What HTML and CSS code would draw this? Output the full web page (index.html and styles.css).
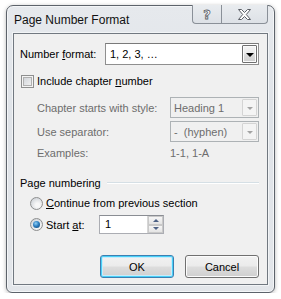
FILE: index.html
```html
<!DOCTYPE html>
<html lang="en">
<head>
    <meta charset="UTF-8">
    <title>Page Number Format</title>
    <link rel="stylesheet" href="styles.css">
</head>
<body>
    <div class="window">
        <div class="titlebar">
            <div class="title">Page Number Format</div>
            <div class="caption-buttons">
                <div class="cap-btn help">?</div>
                <div class="cap-btn close">
                    <svg width="13" height="11" viewBox="0 0 13 11">
                        <polygon points="0.5,0.5 3.5,0.5 6.5,3.5 9.5,0.5 12.5,0.5 8.3,5.5 12.5,10.5 9.5,10.5 6.5,7.5 3.5,10.5 0.5,10.5 4.7,5.5" fill="#fff" stroke="#5b5f66" stroke-width="1"/>
                    </svg>
                </div>
            </div>
        </div>

        <div class="client">
            <div class="row format-row">
                <span class="format-label">Number <u>f</u>ormat:</span>
                <div class="combo format-combo">
                    <span class="combo-text">1, 2, 3, …</span>
                    <span class="drop"><i class="tri"></i></span>
                </div>
            </div>

            <div class="row check-row">
                <span class="checkbox"></span>
                <span>Include chapter <u>n</u>umber</span>
            </div>

            <div class="row sub-row style-row">
                <span class="sub-label">Chapter starts with style:</span>
                <div class="combo small-combo disabled">
                    <span class="combo-text">Heading 1</span>
                    <span class="drop"><i class="tri"></i></span>
                </div>
            </div>

            <div class="row sub-row sep-row">
                <span class="sub-label">Use separator:</span>
                <div class="combo small-combo disabled">
                    <span class="combo-text pre">-  (hyphen)</span>
                    <span class="drop"><i class="tri"></i></span>
                </div>
            </div>

            <div class="row sub-row examples-row">
                <span class="sub-label">Examples:</span>
                <span class="example-value">1-1, 1-A</span>
            </div>

            <div class="row group-header">
                <span>Page numbering</span>
                <span class="group-line"></span>
            </div>

            <div class="row radio-row first-radio">
                <span class="radio"></span>
                <span><u>C</u>ontinue from previous section</span>
            </div>

            <div class="row radio-row start-row">
                <span class="radio checked"></span>
                <span class="start-label">Start <u>a</u>t:</span>
                <div class="spinner">
                    <span class="spin-text">1</span>
                    <span class="spin-btns">
                        <span class="spin-btn"><i class="tri-up"></i></span>
                        <span class="spin-btn"><i class="tri-down"></i></span>
                    </span>
                </div>
            </div>

            <div class="row button-row">
                <button class="btn default">OK</button>
                <button class="btn">Cancel</button>
            </div>
        </div>
    </div>
</body>
</html>
```

FILE: styles.css
```css
* {
    box-sizing: border-box;
}

body {
    margin: 0;
    background: #ffffff;
    font-family: "Liberation Sans", Arial, sans-serif;
    font-size: 11px;
    color: #000;
}

u {
    text-decoration: underline;
    text-underline-offset: 1px;
}

.window {
    margin: 5px 6px 0 6px;
    width: 269px;
    height: 288px;
    border: 1px solid #5d636b;
    border-radius: 7px 7px 6px 6px;
    background: linear-gradient(#e6e9ed, #dfe3e8 40%, #e3e6ea);
    box-shadow: 0 1px 4px rgba(0, 0, 0, 0.28), inset 0 0 0 1px #f4f6f8;
    padding: 0 6px 7px 6px;
}

.titlebar {
    height: 27px;
    display: flex;
    justify-content: space-between;
    align-items: flex-start;
}

.title {
    font-size: 12px;
    line-height: 14px;
    margin-top: 7px;
    padding-left: 1px;
    color: #111;
}

.caption-buttons {
    display: flex;
    margin-top: -1px;
    margin-right: 0;
}

.cap-btn {
    height: 19px;
    border: 1px solid #8a9098;
    border-top: none;
    background: linear-gradient(#e9ecef, #dde1e6);
    display: flex;
    align-items: center;
    justify-content: center;
}

.help {
    width: 29px;
    border-radius: 0 0 0 4px;
    border-right: none;
    font-family: "DejaVu Sans", sans-serif;
    font-weight: bold;
    font-size: 13px;
    color: #fff;
    -webkit-text-stroke: 0.8px #5b5f66;
}

.close {
    width: 47px;
    border-radius: 0 0 4px 0;
}

.client {
    height: 252px;
    border: 1px solid #717880;
    background: #f0f0f0;
    padding: 0 8px 0 6px;
    box-shadow: 0 0 0 1px #f2f4f6;
}

.row {
    display: flex;
    align-items: center;
}

.format-row {
    margin-top: 9px;
    height: 22px;
}

.format-label {
    width: 85px;
}

.combo {
    display: flex;
    align-items: center;
    justify-content: space-between;
    background: #fff;
    border: 1px solid #8f8f8f;
    border-top-color: #7a7a7a;
    padding: 1px 1px 1px 4px;
}

.format-combo {
    width: 154px;
    height: 22px;
}

.drop {
    width: 15px;
    height: 18px;
    border: 1px solid #707070;
    border-radius: 1px;
    background: linear-gradient(#f4f4f4 0%, #ebebeb 45%, #dcdcdc 55%, #cfcfcf 100%);
    box-shadow: inset 0 0 0 1px #fbfbfb;
    display: flex;
    align-items: center;
    justify-content: center;
}

.tri {
    width: 0;
    height: 0;
    border-left: 4px solid transparent;
    border-right: 4px solid transparent;
    border-top: 4px solid #000;
    margin-top: 1px;
}

.check-row {
    margin-top: 8px;
    height: 16px;
    padding-left: 1px;
}

.checkbox {
    width: 13px;
    height: 13px;
    border: 1px solid #8e8f8f;
    background: #f4f4f4;
    box-shadow: inset 0 0 0 1px #f4f4f4, inset 0 0 0 2px #b0b0b0;
    background-image: linear-gradient(135deg, #cbcfd5, #f6f6f6);
    margin-right: 3px;
}

.sub-row {
    padding-left: 17px;
    color: #6d6d6d;
}

.sub-label {
    width: 133px;
}

.style-row {
    margin-top: 8px;
    height: 21px;
}

.sep-row {
    margin-top: 3px;
    height: 21px;
}

.small-combo {
    width: 89px;
    height: 21px;
    padding-left: 3px;
}

.combo.disabled {
    background: #f0f0f0;
    border-color: #adb2b5;
    color: #6d6d6d;
}

.combo.disabled .drop {
    height: 17px;
    border-color: #d4d4d4;
    background: #f4f4f4;
    box-shadow: none;
}

.combo.disabled .tri {
    border-top-color: #a3a3a3;
    border-left-width: 3px;
    border-right-width: 3px;
    border-top-width: 3px;
}

.pre {
    white-space: pre;
}

.examples-row {
    margin-top: 4px;
    height: 14px;
}

.group-header {
    margin-top: 16px;
    height: 14px;
}

.group-line {
    flex: 1;
    height: 2px;
    margin-left: 6px;
    border-top: 1px solid #d5dfe5;
    border-bottom: 1px solid #ffffff;
}

.radio-row {
    padding-left: 10px;
}

.first-radio {
    margin-top: 5px;
    height: 16px;
}

.start-row {
    margin-top: 4px;
    height: 19px;
}

.radio {
    width: 13px;
    height: 13px;
    border-radius: 50%;
    border: 1px solid #8e8f8f;
    background: radial-gradient(circle at 60% 65%, #f7f7f7 20%, #d0d4d9 80%);
    margin-right: 3px;
    display: flex;
    align-items: center;
    justify-content: center;
}

.radio.checked::after {
    content: "";
    width: 7px;
    height: 7px;
    border-radius: 50%;
    background: radial-gradient(circle at 40% 35%, #8fd0f5 0%, #2e7fc1 45%, #0b3d6b 100%);
}

.start-label {
    width: 53px;
}

.spinner {
    width: 65px;
    height: 19px;
    background: #fff;
    border: 1px solid #abadb3;
    border-top-color: #8a8d93;
    display: flex;
    justify-content: space-between;
    align-items: stretch;
}

.spin-text {
    padding-left: 5px;
    line-height: 17px;
}

.spin-btns {
    width: 16px;
    display: flex;
    flex-direction: column;
    border-left: 1px solid #d6d6d6;
}

.spin-btn {
    flex: 1;
    border: 1px solid #c9c9c9;
    background: linear-gradient(#f6f6f6, #e4e4e4);
    display: flex;
    align-items: center;
    justify-content: center;
}

.tri-up,
.tri-down {
    width: 0;
    height: 0;
    border-left: 3px solid transparent;
    border-right: 3px solid transparent;
}

.tri-up {
    border-bottom: 3px solid #4d6185;
}

.tri-down {
    border-top: 3px solid #4d6185;
}

.button-row {
    margin-top: 21px;
    justify-content: flex-end;
    gap: 11px;
}

.btn {
    width: 74px;
    height: 23px;
    font-family: "Liberation Sans", Arial, sans-serif;
    font-size: 11px;
    color: #000;
    border: 1px solid #707070;
    border-radius: 3px;
    background: linear-gradient(#f2f2f2 0%, #ebebeb 48%, #dddddd 52%, #cfcfcf 100%);
    box-shadow: inset 0 0 0 1px #fcfcfc;
    padding: 0;
}

.btn.default {
    border-color: #3c7fb1;
    box-shadow: inset 0 0 0 1px #48d0f8, inset 0 0 0 2px #c8ecfb;
}
```
